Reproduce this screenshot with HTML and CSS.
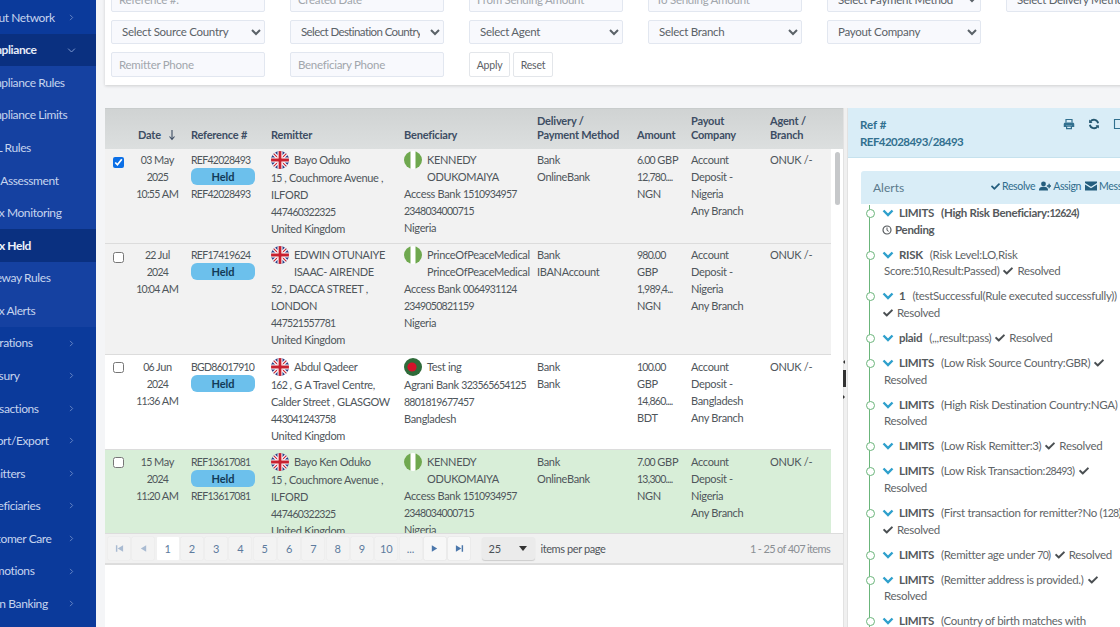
FILE: index.html
```html
<!DOCTYPE html>
<html lang="en">
<head>
<meta charset="utf-8">
<title>Tnx Held</title>
<link rel="stylesheet" href="styles.css">
</head>
<body>
<svg class="defs" width="0" height="0" aria-hidden="true">
  <defs>
    <symbol id="check" viewBox="0 0 512 512"><path fill="currentColor" d="M173.898 439.404l-166.4-166.4c-9.997-9.997-9.997-26.206 0-36.204l36.203-36.204c9.997-9.998 26.207-9.998 36.204 0L192 312.69 432.095 72.596c9.997-9.997 26.207-9.997 36.204 0l36.203 36.204c9.997 9.997 9.997 26.206 0 36.204l-294.4 294.401c-9.998 9.997-26.207 9.997-36.204-.001z"/></symbol>
    <symbol id="chev" viewBox="0 0 12 8"><path d="M1.5 1.5 6 6l4.5-4.5" fill="none" stroke="currentColor"/></symbol>
    <symbol id="uk" viewBox="0 0 18 18">
      <clipPath id="c1"><circle cx="9" cy="9" r="9"/></clipPath>
      <g clip-path="url(#c1)"><rect width="18" height="18" fill="#2b3f86"/>
      <path d="M0 0 18 18M18 0 0 18" stroke="#fff" stroke-width="3.4"/><path d="M0 0 18 18M18 0 0 18" stroke="#c8202f" stroke-width="1.1"/>
      <path d="M9 0V18M0 9H18" stroke="#fff" stroke-width="5"/><path d="M9 0V18M0 9H18" stroke="#c8202f" stroke-width="2.8"/></g>
    </symbol>
    <symbol id="ng" viewBox="0 0 18 18">
      <clipPath id="c2"><circle cx="9" cy="9" r="9"/></clipPath>
      <g clip-path="url(#c2)"><rect width="18" height="18" fill="#fff"/><rect width="6.5" height="18" fill="#6fa84f"/><rect x="11.5" width="6.5" height="18" fill="#6fa84f"/></g>
    </symbol>
    <symbol id="bd" viewBox="0 0 18 18"><circle cx="9" cy="9" r="9" fill="#2f6b3a"/><circle cx="8" cy="9" r="4.6" fill="#d3122a"/></symbol>
    <symbol id="first" viewBox="0 0 10 10"><path d="M1 1.5h1.6v7H1zM9 1.5v7L3 5z" fill="currentColor"/></symbol>
    <symbol id="prev" viewBox="0 0 10 10"><path d="M8 1.5v7L2 5z" fill="currentColor"/></symbol>
    <symbol id="next" viewBox="0 0 10 10"><path d="M2 1.5v7L8 5z" fill="currentColor"/></symbol>
    <symbol id="last" viewBox="0 0 10 10"><path d="M9 1.5H7.4v7H9zM1 1.5v7L7 5z" fill="currentColor"/></symbol>
  </defs>
</svg>

<div class="app">
  <nav class="sidebar">
    <ul class="menu">
      <li class="item">About Network<svg class="arrow"><use href="#chev"/></svg></li>
      <li class="item active">Compliance<svg class="arrow down"><use href="#chev"/></svg></li>
      <li class="item sub">Compliance Rules</li>
      <li class="item sub">Compliance Limits</li>
      <li class="item sub">AML Rules</li>
      <li class="item sub">Risk Assessment</li>
      <li class="item sub tnx">Tnx Monitoring</li>
      <li class="item sub tnx current">Tnx Held</li>
      <li class="item sub">Gateway Rules</li>
      <li class="item sub tnx">Tnx Alerts</li>
      <li class="item">Operations<svg class="arrow"><use href="#chev"/></svg></li>
      <li class="item">Treasury<svg class="arrow"><use href="#chev"/></svg></li>
      <li class="item">Transactions<svg class="arrow"><use href="#chev"/></svg></li>
      <li class="item">Import/Export<svg class="arrow"><use href="#chev"/></svg></li>
      <li class="item">Remitters<svg class="arrow"><use href="#chev"/></svg></li>
      <li class="item">Beneficiaries<svg class="arrow"><use href="#chev"/></svg></li>
      <li class="item">Customer Care<svg class="arrow"><use href="#chev"/></svg></li>
      <li class="item">Promotions<svg class="arrow"><use href="#chev"/></svg></li>
      <li class="item">Open Banking<svg class="arrow"><use href="#chev"/></svg></li>
    </ul>
  </nav>

  <main class="content">
    <section class="filters">
      <div class="frow">
        <input class="field" placeholder="Reference #.">
        <input class="field" placeholder="Created Date">
        <input class="field" placeholder="From Sending Amount">
        <input class="field" placeholder="To Sending Amount">
        <select class="field pick"><option>Select Payment Method</option></select>
        <select class="field pick"><option>Select Delivery Method</option></select>
      </div>
      <div class="frow">
        <select class="field pick"><option>Select Source Country</option></select>
        <select class="field pick dest"><option>Select Destination Country</option></select>
        <select class="field pick"><option>Select Agent</option></select>
        <select class="field pick"><option>Select Branch</option></select>
        <select class="field pick"><option>Payout Company</option></select>
      </div>
      <div class="frow">
        <input class="field" placeholder="Remitter Phone">
        <input class="field" placeholder="Beneficiary Phone">
        <div class="btns"><button class="btn">Apply</button><button class="btn">Reset</button></div>
      </div>
    </section>

    <div class="split">
      <section class="grid">
        <div class="thead">
          <table class="tbl">
            <colgroup><col class="c0"><col class="c1"><col class="c2"><col class="c3"><col class="c4"><col class="c5"><col class="c6"><col class="c7"><col class="c8"></colgroup>
            <tr>
              <th></th>
              <th>Date<svg class="sort" viewBox="0 0 8 12"><path d="M4 1v9M1.5 7.5 4 10.5l2.5-3" fill="none" stroke="currentColor" stroke-width="1.1"/></svg></th>
              <th>Reference #</th>
              <th>Remitter</th>
              <th>Beneficiary</th>
              <th>Delivery /<br>Payment Method</th>
              <th>Amount</th>
              <th>Payout<br>Company</th>
              <th>Agent /<br>Branch</th>
            </tr>
          </table>
        </div>
        <div class="tbody">
          <table class="tbl">
            <colgroup><col class="c0"><col class="c1"><col class="c2"><col class="c3"><col class="c4"><col class="c5"><col class="c6"><col class="c7"><col class="c8"></colgroup>
            <tr class="gray">
              <td><input class="chk" type="checkbox" checked></td>
              <td class="date"><span class="n">03</span> May<br><span class="n">2025</span><br><span class="n">10:55</span> AM</td>
              <td><span class="n">REF42028493</span><span class="held">Held</span><span class="n">REF42028493</span></td>
              <td><div class="who"><svg class="flag"><use href="#uk"/></svg><span>Bayo Oduko</span></div><span class="n">15</span> , Couchmore Avenue ,<br>ILFORD<br><span class="n">447460322325</span><br>United Kingdom</td>
              <td><div class="who"><svg class="flag"><use href="#ng"/></svg><span>KENNEDY<br>ODUKOMAIYA</span></div>Access Bank <span class="n">1510934957</span><br><span class="n">2348034000715</span><br>Nigeria</td>
              <td>Bank<br>OnlineBank</td>
              <td><span class="n">6.00</span> GBP<br><span class="n">12,780....</span><br>NGN</td>
              <td>Account<br>Deposit -<br>Nigeria<br>Any Branch</td>
              <td>ONUK /-</td>
            </tr>
            <tr class="gray">
              <td><input class="chk" type="checkbox"></td>
              <td class="date"><span class="n">22</span> Jul<br><span class="n">2024</span><br><span class="n">10:04</span> AM</td>
              <td><span class="n">REF17419624</span><span class="held">Held</span></td>
              <td><div class="who"><svg class="flag"><use href="#uk"/></svg><span>EDWIN OTUNAIYE<br>ISAAC- AIRENDE</span></div><span class="n">52</span> , DACCA STREET ,<br>LONDON<br><span class="n">447521557781</span><br>United Kingdom</td>
              <td><div class="who"><svg class="flag"><use href="#ng"/></svg><span>PrinceOfPeaceMedical<br>PrinceOfPeaceMedical</span></div>Access Bank <span class="n">0064931124</span><br><span class="n">2349050821159</span><br>Nigeria</td>
              <td>Bank<br>IBANAccount</td>
              <td><span class="n">980.00</span><br>GBP<br><span class="n">1,989,4...</span><br>NGN</td>
              <td>Account<br>Deposit -<br>Nigeria<br>Any Branch</td>
              <td>ONUK /-</td>
            </tr>
            <tr>
              <td><input class="chk" type="checkbox"></td>
              <td class="date"><span class="n">06</span> Jun<br><span class="n">2024</span><br><span class="n">11:36</span> AM</td>
              <td><span class="n">BGD86017910</span><span class="held">Held</span></td>
              <td><div class="who"><svg class="flag"><use href="#uk"/></svg><span>Abdul Qadeer</span></div><span class="n">162</span> , G A Travel Centre,<br>Calder Street , GLASGOW<br><span class="n">443041243758</span><br>United Kingdom</td>
              <td><div class="who"><svg class="flag"><use href="#bd"/></svg><span>Test ing</span></div>Agrani Bank <span class="n">323565654125</span><br><span class="n">8801819677457</span><br>Bangladesh</td>
              <td>Bank<br>Bank</td>
              <td><span class="n">100.00</span><br>GBP<br><span class="n">14,860....</span><br>BDT</td>
              <td>Account<br>Deposit -<br>Bangladesh<br>Any Branch</td>
              <td>ONUK /-</td>
            </tr>
            <tr class="green">
              <td><input class="chk" type="checkbox"></td>
              <td class="date"><span class="n">15</span> May<br><span class="n">2024</span><br><span class="n">11:20</span> AM</td>
              <td><span class="n">REF13617081</span><span class="held">Held</span><span class="n">REF13617081</span></td>
              <td><div class="who"><svg class="flag"><use href="#uk"/></svg><span>Bayo Ken Oduko</span></div><span class="n">15</span> , Couchmore Avenue ,<br>ILFORD<br><span class="n">447460322325</span><br>United Kingdom</td>
              <td><div class="who"><svg class="flag"><use href="#ng"/></svg><span>KENNEDY<br>ODUKOMAIYA</span></div>Access Bank <span class="n">1510934957</span><br><span class="n">2348034000715</span><br>Nigeria</td>
              <td>Bank<br>OnlineBank</td>
              <td><span class="n">7.00</span> GBP<br><span class="n">13,300....</span><br>NGN</td>
              <td>Account<br>Deposit -<br>Nigeria<br>Any Branch</td>
              <td>ONUK /-</td>
            </tr>
          </table>
          <div class="thumb"></div>
        </div>
        <div class="pager">
          <span class="pg off"><svg class="pi"><use href="#first"/></svg></span><span class="pg off"><svg class="pi"><use href="#prev"/></svg></span>
          <span class="pg on">1</span><span class="pg">2</span><span class="pg">3</span><span class="pg">4</span><span class="pg">5</span><span class="pg">6</span><span class="pg">7</span><span class="pg">8</span><span class="pg">9</span><span class="pg">10</span><span class="pg">...</span>
          <span class="pg nav"><svg class="pi"><use href="#next"/></svg></span><span class="pg nav"><svg class="pi"><use href="#last"/></svg></span>
          <span class="size">25<i class="tri"></i></span>
          <span class="ipp">items per page</span>
          <span class="count">1 - 25 of 407 items</span>
        </div>
      </section>

      <div class="splitter"><i class="nub up"></i><i class="handle"></i><i class="nub dn"></i></div>

      <aside class="detail">
        <header class="dhead">
          <div class="dref">Ref #<br><span class="dnum">REF42028493/28493</span></div>
          <div class="dicons">
            <svg class="di" viewBox="0 0 16 16"><path d="M4 6V2h8v4" fill="none" stroke="currentColor" stroke-width="1.6"/><path d="M3 6h10a2 2 0 0 1 2 2v4h-3v-2H4v2H1V8a2 2 0 0 1 2-2z" fill="currentColor"/><path d="M4.8 10.8h6.4v3.4H4.8z" fill="none" stroke="currentColor" stroke-width="1.6"/></svg>
            <svg class="di dark" viewBox="0 0 16 16"><path d="M13.5 7A5.6 5.6 0 0 0 3.4 4.8M2.5 9a5.6 5.6 0 0 0 10.1 2.2" fill="none" stroke="currentColor" stroke-width="2.4"/><path d="M1.5 2v4.5H6zM14.5 14V9.5H10z" fill="currentColor"/></svg>
            <svg class="di" viewBox="0 0 16 16"><path d="M2 2h12v12H2z" fill="none" stroke="currentColor" stroke-width="1.5"/></svg>
          </div>
        </header>
        <div class="alerts">
          <div class="ahead">
            <span class="atitle">Alerts</span>
            <span class="aacts">
              <span class="act"><svg class="ic"><use href="#check"/></svg>Resolve</span>
              <span class="act"><svg class="ic wide" viewBox="0 0 16 12"><circle cx="6" cy="3.2" r="3.2" fill="currentColor"/><path d="M0 12c0-4 2-5 6-5s6 1 6 5z" fill="currentColor"/><path d="M13.5 3v6M10.5 6h5.5" stroke="currentColor" stroke-width="1.8"/></svg>Assign</span>
              <span class="act"><svg class="ic wide" viewBox="0 0 16 12"><path d="M0 0h16v2L8 7 0 2zM0 4l8 5 8-5v8H0z" fill="currentColor"/></svg>Message</span>
            </span>
          </div>
          <ul class="tl">
            <li class="ev"><svg class="ch"><use href="#chev"/></svg><b>LIMITS</b><b class="gap">(High Risk Beneficiary:<span class="n">12624</span>)</b><div class="pend"><svg class="clock" viewBox="0 0 12 12"><circle cx="6" cy="6" r="4.8" fill="none" stroke="currentColor" stroke-width="1.4"/><path d="M6 3v3.4l2 1.2" fill="none" stroke="currentColor" stroke-width="1.2"/></svg>Pending</div></li>
            <li class="ev"><svg class="ch"><use href="#chev"/></svg><b>RISK</b><span class="gap">(Risk Level:LO,Risk</span><br><span class="ind">Score:<span class="n">510</span>,Result:Passed)</span><svg class="tick"><use href="#check"/></svg>Resolved</li>
            <li class="ev"><svg class="ch"><use href="#chev"/></svg><b>1</b><span class="gap">(testSuccessful(Rule executed successfully))</span><br><svg class="tick first"><use href="#check"/></svg>Resolved</li>
            <li class="ev"><svg class="ch"><use href="#chev"/></svg><b>plaid</b><span class="gap">(,,,result:pass)</span><svg class="tick"><use href="#check"/></svg>Resolved</li>
            <li class="ev"><svg class="ch"><use href="#chev"/></svg><b>LIMITS</b><span class="gap">(Low Risk Source Country:GBR)</span><svg class="tick"><use href="#check"/></svg><br><span class="ind">Resolved</span></li>
            <li class="ev"><svg class="ch"><use href="#chev"/></svg><b>LIMITS</b><span class="gap">(High Risk Destination Country:NGA)</span><svg class="tick"><use href="#check"/></svg><br><span class="ind">Resolved</span></li>
            <li class="ev"><svg class="ch"><use href="#chev"/></svg><b>LIMITS</b><span class="gap">(Low Risk Remitter:3)</span><svg class="tick"><use href="#check"/></svg>Resolved</li>
            <li class="ev"><svg class="ch"><use href="#chev"/></svg><b>LIMITS</b><span class="gap">(Low Risk Transaction:<span class="n">28493</span>)</span><svg class="tick"><use href="#check"/></svg><br><span class="ind">Resolved</span></li>
            <li class="ev"><svg class="ch"><use href="#chev"/></svg><b>LIMITS</b><span class="gap">(First transaction for remitter?No (<span class="n">128</span>))</span><br><svg class="tick first"><use href="#check"/></svg>Resolved</li>
            <li class="ev"><svg class="ch"><use href="#chev"/></svg><b>LIMITS</b><span class="gap">(Remitter age under <span class="n">70</span>)</span><svg class="tick"><use href="#check"/></svg>Resolved</li>
            <li class="ev"><svg class="ch"><use href="#chev"/></svg><b>LIMITS</b><span class="gap">(Remitter address is provided.)</span><svg class="tick"><use href="#check"/></svg><br><span class="ind">Resolved</span></li>
            <li class="ev"><svg class="ch"><use href="#chev"/></svg><b>LIMITS</b><span class="gap">(Country of birth matches with</span></li>
          </ul>
        </div>
      </aside>
    </div>
  </main>
</div>
</body>
</html>
```

FILE: styles.css
```css
* { box-sizing: border-box; }
html, body { margin: 0; height: 100%; overflow: hidden; }
body { font-family: "Lato", "Noto Sans", sans-serif; font-size: 11px; color: #4a5157; background: #f4f5f7; }
.defs { position: absolute; }
.app { display: flex; width: 1120px; height: 627px; overflow: hidden; }
.n { letter-spacing: -0.72px; font-size: 10.5px; line-height: 1; }

.sidebar { flex: 0 0 96px; width: 96px; overflow: hidden; background: #0b3a9b; }
.menu { list-style: none; margin: 0 0 0 -22px; padding: 0; width: 118px; }
.item { display: flex; align-items: center; height: 32.57px; white-space: nowrap; color: #c6d4ee; font-size: 12px; letter-spacing: -0.4px; position: relative; }
.item:first-child { margin-top: 1px; }
.item.tnx { padding-left: 9px; }
.item.active { background: #0a3080; color: #e6ecf8; font-weight: 700; }
.item.sub { background: #1541a1; }
.item.current { background: #0a3080; color: #eef2fa; font-weight: 700; }
.arrow { position: absolute; left: 90px; top: 13px; width: 7px; height: 7px; color: #7f9bd2; stroke-width: 1.3; transform: rotate(-90deg); }
.arrow.down { transform: none; left: 89px; width: 9px; }

.content { flex: 1 1 auto; min-width: 0; padding-left: 9px; display: flex; flex-direction: column; }
.filters { width: 1100px; height: 98px; margin-top: -13px; padding: 0 0 0 6px; background: #fff; box-shadow: 0 1px 3px rgba(0,0,0,.16); display: flex; flex-direction: column; gap: 8px; flex: none; }
.frow { display: flex; gap: 25px; height: 24.5px; flex: none; }
.field { width: 154px; height: 24.5px; flex: none; border: 1px solid #e2e7f0; border-radius: 2px; background: #f8f9fd; color: #5b6268; font: 11.5px "Lato", sans-serif; letter-spacing: -0.28px; padding: 0 7px; }
.field::placeholder { color: #a1a6ac; opacity: 1; }
.pick { padding-left: 6px; }
.pick.dest { letter-spacing: -0.6px; }
.btns { display: flex; gap: 3px; }
.btn { width: 41px; height: 25px; border: 1px solid #e3e6ea; border-radius: 2px; background: #fff; color: #5c6166; font: 10.5px "Lato", sans-serif; letter-spacing: -0.2px; padding: 0; }
.btn + .btn { width: 40px; }

.split { display: flex; height: 519px; margin-top: 23px; flex: none; }
.grid { flex: 0 0 738px; width: 738px; display: flex; flex-direction: column; background: #fff; }
.thead { height: 41px; flex: none; background: linear-gradient(#d0d3d3, #dcdfdf); border-top: 1px solid #c8cccc; padding-right: 12px; }
.tbl { border-collapse: collapse; table-layout: fixed; width: 726px; }
.c0 { width: 26px; } .c1 { width: 53px; } .c2 { width: 80px; } .c3 { width: 133px; } .c4 { width: 133px; } .c5 { width: 100px; } .c6 { width: 54px; } .c7 { width: 79px; } .c8 { width: 68px; }
.thead th { height: 40px; padding: 0 0 7px 7px; text-align: left; vertical-align: bottom; font-size: 11px; line-height: 14px; letter-spacing: -0.2px; font-weight: 700; color: #3d4d63; }
.sort { width: 8px; height: 12px; margin-left: 7px; vertical-align: -2px; }
.tbody { flex: none; height: 384px; overflow: hidden; position: relative; }
.tbl td { padding: 3px 0 5px 7px; vertical-align: top; line-height: 17px; font-size: 11px; letter-spacing: -0.32px; color: #4f565b; border-bottom: 1px solid #dcdcdc; overflow: hidden; white-space: nowrap; }
.tbl .gray td { padding-top: 2px; padding-bottom: 6px; background: #f2f2f2; }
.tbl .gray td:first-child { padding: 1px 0 0; }
.green td { background: #d8eed8; border-bottom: 0; }
.tbl td:first-child { padding: 0; text-align: center; }
.tbl td.date { text-align: center; padding-left: 2px; padding-right: 2px; }
.chk { width: 11px; height: 11px; margin: 7px 0 0 0; accent-color: #0b6fe6; }
.held { display: block; width: 64px; height: 17px; margin: 0; border-radius: 6px; background: #6cc0ec; color: #123a57; text-align: center; font-weight: 700; line-height: 17px; letter-spacing: 0; }
.who { display: flex; gap: 5px; }
.flag { flex: none; width: 18px; height: 18px; }
.thumb { position: absolute; right: 3px; top: 3px; width: 5px; height: 53px; border-radius: 3px; background: #c6c8ca; }

.pager { flex: none; height: 32px; display: flex; align-items: center; padding-left: 3px; background: #f1f1f1; border-top: 1px solid #dcdcdc; border-bottom: 2px solid #dddddd; font-size: 11px; color: #5d7b9e; position: relative; }
.pg { width: 22px; height: 23px; margin-right: 2.3px; display: flex; align-items: center; justify-content: center; border-radius: 1px; background: #f3f3f3; box-shadow: 0 0 1px #d5d5d5; font-size: 11px; }
.pi { width: 9px; height: 9px; }
.pg.off { color: #a9bbd2; }
.pg.nav { color: #4b77ab; background: #f7f7f7; box-shadow: 0 0 1px #bbb; }
.pg.on { background: #fff; color: #5d7b9e; box-shadow: none; }
.size { margin-left: 10px; width: 53px; height: 23px; display: flex; align-items: center; justify-content: space-between; padding: 0 8px 0 6px; background: #ebebeb; border-radius: 3px; box-shadow: 0 1px 1px #ccc; color: #4a5157; }
.tri { width: 0; height: 0; border: 4px solid transparent; border-top: 5px solid #333; border-bottom: 0; }
.ipp { margin-left: 5px; color: #50565b; letter-spacing: -0.4px; }
.count { margin-left: auto; margin-right: 13px; color: #8a8f94; letter-spacing: -0.65px; }

.splitter { flex: 0 0 5px; width: 5px; background: #f0f0f0; border-left: 1px solid #e2e2e2; border-right: 1px solid #e2e2e2; position: relative; }
.handle { position: absolute; left: -1px; top: 262px; width: 3px; height: 17px; background: #333; }
.nub { position: absolute; left: -1px; width: 0; height: 0; border: 2.5px solid transparent; }
.nub.up { top: 252px; border-right-color: #333; border-left: 0; }
.nub.dn { top: 287px; border-left-color: #333; border-right: 0; }

.detail { flex: none; width: 290px; background: #fff; display: flex; flex-direction: column; overflow: hidden; }
.dhead { flex: none; height: 50px; background: #d9edf7; border-bottom: 1px solid #c6e2ee; padding: 8px 0 0 12px; display: flex; width: 100%; position: relative; }
.dref { font-weight: 700; font-size: 11.5px; line-height: 17px; color: #31708f; white-space: nowrap; }
.dnum { letter-spacing: -0.55px; }
.dicons { position: absolute; left: 215px; top: 10px; display: flex; gap: 13px; color: #31708f; }
.di { width: 12px; height: 12px; }
.di.dark { color: #245770; }
.alerts { margin: 13px 0 0 13px; width: 290px; flex: none; }
.ahead { height: 33px; background: #d9edf7; border-radius: 3px 3px 0 0; display: flex; align-items: center; padding-left: 12px; position: relative; }
.atitle { font-size: 12px; color: #5a7a8c; }
.aacts { position: absolute; left: 130px; top: 9px; display: flex; gap: 4px; white-space: nowrap; font-size: 10.5px; letter-spacing: -0.35px; color: #2f6c8c; }
.act { display: inline-flex; align-items: center; }
.ic { width: 9px; height: 9px; margin-right: 2px; color: #245e7e; }
.ic.wide { width: 12px; height: 10px; }
.tl { list-style: none; margin: 0; padding: 0 0 0 21px; position: relative; }
.tl::before { content: ""; position: absolute; left: 8px; top: 0; bottom: -50px; width: 1px; background: #6bb57b; }
.ev { position: relative; font-size: 11.5px; line-height: 16.5px; letter-spacing: -0.3px; color: #5f6568; white-space: nowrap; margin-bottom: 8.63px; }
.ev:first-child { margin-top: 1px; }
.ev::before { content: ""; position: absolute; left: -16px; top: 4px; width: 7px; height: 7px; border-radius: 50%; background: #fff; border: 1px solid #6bb57b; }
.ch { width: 12px; height: 8px; color: #2fa0cc; stroke-width: 2.4; margin: 0 5px 0 0; }
.ev b { color: #55595c; }
.gap { margin-left: 7px; }
.ind { margin-left: 2px; }
.tick { width: 10px; height: 10px; margin: 0 4px; vertical-align: -1px; color: #4a4f52; }
.tick.first { margin-left: 1px; }
.pend { font-weight: 700; color: #55595c; }
.clock { width: 10px; height: 10px; margin-right: 3px; vertical-align: -1px; }
```
